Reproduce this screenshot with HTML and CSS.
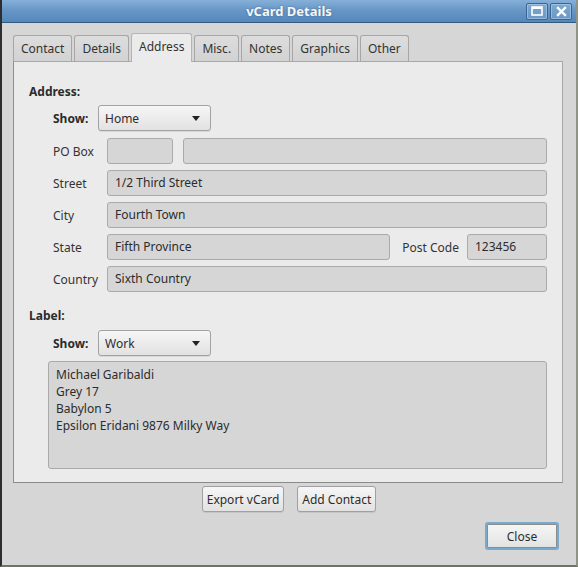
FILE: index.html
```html
<!DOCTYPE html>
<html lang="en">
<head>
    <meta charset="UTF-8">
    <title>vCard Details</title>
    <link rel="stylesheet" href="styles.css">
</head>
<body>

    <div class="window">
        <div class="titlebar">
            <span></span>
            <span class="title">vCard Details</span>
            <div class="wm-buttons">
                <span class="wm-btn">
                    <svg width="12" height="10" viewBox="0 0 12 10"><rect x="1" y="1" width="10" height="8" fill="none" stroke="#fff" stroke-width="1.6"/><rect x="1" y="1" width="10" height="2" fill="#fff"/></svg>
                </span>
                <span class="wm-btn">
                    <svg width="11" height="11" viewBox="0 0 11 11"><path d="M2 2 L9 9 M9 2 L2 9" stroke="#fff" stroke-width="2.4" stroke-linecap="square"/></svg>
                </span>
            </div>
        </div>

        <div class="content">
            <div class="tabs">
                <span class="tab">Contact</span>
                <span class="tab">Details</span>
                <span class="tab active">Address</span>
                <span class="tab">Misc.</span>
                <span class="tab">Notes</span>
                <span class="tab">Graphics</span>
                <span class="tab">Other</span>
            </div>

            <div class="panel">
                <div class="section-title">Address:</div>
                <div class="show-row">
                    <span class="show-label">Show:</span>
                    <div class="combo"><span>Home</span><span class="arrow"></span></div>
                </div>

                <div class="fields">
                    <div class="row">
                        <span class="row-label">PO Box</span>
                        <div class="field pobox"></div>
                        <div class="field grow"></div>
                    </div>
                    <div class="row">
                        <span class="row-label">Street</span>
                        <div class="field grow">1/2 Third Street</div>
                    </div>
                    <div class="row">
                        <span class="row-label">City</span>
                        <div class="field grow">Fourth Town</div>
                    </div>
                    <div class="row">
                        <span class="row-label">State</span>
                        <div class="field grow">Fifth Province</div>
                        <span class="post-label">Post Code</span>
                        <div class="field postcode">123456</div>
                    </div>
                    <div class="row">
                        <span class="row-label">Country</span>
                        <div class="field grow">Sixth Country</div>
                    </div>
                </div>

                <div class="section-title label-title">Label:</div>
                <div class="show-row label-show">
                    <span class="show-label">Show:</span>
                    <div class="combo"><span>Work</span><span class="arrow"></span></div>
                </div>

                <div class="label-box">Michael Garibaldi
Grey 17
Babylon 5
Epsilon Eridani 9876 Milky Way</div>
            </div>

            <div class="actions">
                <button class="btn export">Export vCard</button>
                <button class="btn add">Add Contact</button>
            </div>

            <div class="footer">
                <button class="btn close">Close</button>
            </div>
        </div>
    </div>

</body>
</html>
```

FILE: styles.css
```css
body {
    margin: 0;
    padding: 0;
    font-family: "Noto Sans", "Open Sans", sans-serif;
    font-size: 12px;
    color: #2c2c2c;
    background: #d6d6d6;
}

.window {
    width: 578px;
    height: 567px;
    box-sizing: border-box;
    background: #d6d6d6;
    border-left: 2px solid #2e2e2e;
    border-right: 2px solid #8f9486;
    border-bottom: 2px solid #6f7468;
}

.titlebar {
    height: 23px;
    box-sizing: border-box;
    display: grid;
    grid-template-columns: 1fr auto 1fr;
    align-items: center;
    background: linear-gradient(to bottom, #86b0d8, #6897c7 45%, #5587bb);
    border-bottom: 1px solid #33597f;
}

.title {
    color: #f4f7fa;
    font-weight: bold;
    font-size: 13px;
    text-shadow: 0 0 2px rgba(30, 60, 100, 0.5);
}

.wm-buttons {
    justify-self: end;
    display: flex;
    gap: 2px;
    margin-right: 4px;
}

.wm-btn {
    width: 22px;
    height: 17px;
    box-sizing: border-box;
    display: flex;
    align-items: center;
    justify-content: center;
    border: 1px solid #3b6590;
    border-radius: 2px;
    box-shadow: inset 0 0 0 1px rgba(200, 220, 240, 0.45);
    background: rgba(140, 180, 215, 0.35);
}

.content {
    padding: 10px 13px 0 11px;
}

.tabs {
    display: flex;
    align-items: flex-end;
    gap: 2px;
    height: 28px;
    position: relative;
    z-index: 1;
}

.tab {
    height: 26px;
    box-sizing: border-box;
    padding: 0 7px;
    line-height: 25px;
    border: 1px solid #a6a6a6;
    border-bottom: none;
    border-radius: 3px 3px 0 0;
    background: linear-gradient(to bottom, #dddddd, #d2d2d2);
    color: #333;
}

.tab.active {
    height: 29px;
    line-height: 26px;
    margin-bottom: -1px;
    background: #ebebeb;
    border-color: #b4b4b4;
}

.panel {
    width: 550px;
    height: 422px;
    box-sizing: border-box;
    padding: 22px 15px 0 15px;
    background: #ebebeb;
    border: 1px solid #a8a8a8;
    border-left-color: #8e8e8e;
    border-bottom-color: #8a8a8a;
}

.section-title {
    font-weight: bold;
    line-height: 16px;
}

.label-title {
    margin-top: 16px;
}

.show-row {
    display: flex;
    align-items: center;
    margin: 5px 0 0 24px;
}

.show-row.label-show {
    margin-top: 6px;
}

.show-label {
    width: 45px;
    font-weight: bold;
}

.combo {
    width: 113px;
    height: 26px;
    box-sizing: border-box;
    padding: 0 10px 0 6px;
    display: flex;
    align-items: center;
    justify-content: space-between;
    border: 1px solid #a2a2a2;
    border-radius: 3px;
    background: linear-gradient(to bottom, #f6f6f6, #e2e2e2);
    box-shadow: 0 1px 0 rgba(0, 0, 0, 0.08);
}

.arrow {
    width: 0;
    height: 0;
    border-left: 4px solid transparent;
    border-right: 4px solid transparent;
    border-top: 5px solid #222;
}

.fields {
    display: flex;
    flex-direction: column;
    gap: 6px;
    margin: 7px 0 0 24px;
}

.row {
    display: flex;
    align-items: center;
    height: 26px;
}

.row-label {
    width: 54px;
    color: #333;
}

.field {
    height: 26px;
    box-sizing: border-box;
    padding: 0 7px;
    line-height: 24px;
    background: #d6d6d6;
    border: 1px solid #aaaaaa;
    border-radius: 3px;
}

.grow {
    flex: 1;
}

.pobox {
    width: 66px;
    margin-right: 10px;
}

.post-label {
    margin: 0 8px 0 12px;
    color: #333;
}

.postcode {
    width: 80px;
}

.label-box {
    margin: 5px 0 0 19px;
    height: 108px;
    box-sizing: border-box;
    padding: 4px 7px;
    line-height: 17px;
    white-space: pre-line;
    background: #d6d6d6;
    border: 1px solid #aaaaaa;
    border-radius: 3px;
}

.actions {
    display: flex;
    justify-content: center;
    gap: 13px;
    margin-top: 3px;
    padding-left: 2px;
}

.btn {
    height: 26px;
    box-sizing: border-box;
    padding: 0 4px;
    font-family: "Noto Sans", "Open Sans", sans-serif;
    font-size: 12px;
    color: #2c2c2c;
    border: 1px solid #a0a0a0;
    border-radius: 3px;
    background: linear-gradient(to bottom, #f6f6f6, #e2e2e2);
    box-shadow: 0 1px 0 rgba(0, 0, 0, 0.08);
}

.footer {
    display: flex;
    justify-content: flex-end;
    margin-top: 10px;
    padding-right: 4px;
}

.btn.close {
    width: 74px;
    height: 28px;
    border: 2px solid #79a9cd;
    box-shadow: inset 0 0 0 1px #8c8c8c;
}
```
